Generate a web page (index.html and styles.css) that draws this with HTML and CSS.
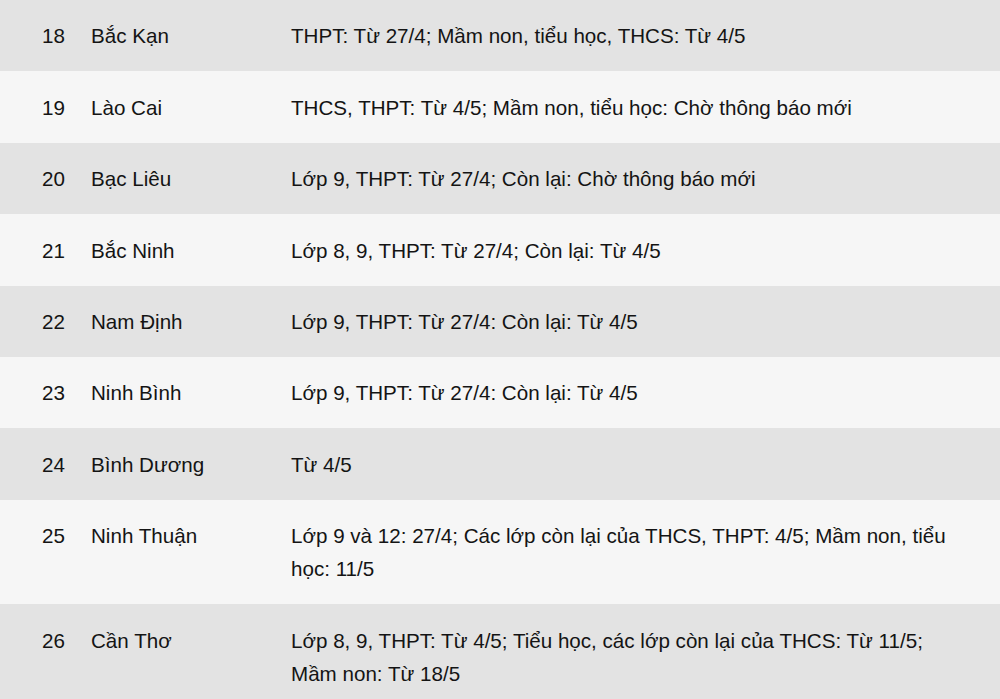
FILE: index.html
```html
<!DOCTYPE html>
<html lang="vi">
<head>
<meta charset="utf-8">
<link rel="stylesheet" href="styles.css">
</head>
<body>
<div class="table">
  <div class="row odd"><div class="num">18</div><div class="name">Bắc Kạn</div><div class="info">THPT: Từ 27/4; Mầm non, tiểu học, THCS: Từ 4/5</div></div>
  <div class="row even"><div class="num">19</div><div class="name">Lào Cai</div><div class="info">THCS, THPT: Từ 4/5; Mầm non, tiểu học: Chờ thông báo mới</div></div>
  <div class="row odd"><div class="num">20</div><div class="name">Bạc Liêu</div><div class="info">Lớp 9, THPT: Từ 27/4; Còn lại: Chờ thông báo mới</div></div>
  <div class="row even"><div class="num">21</div><div class="name">Bắc Ninh</div><div class="info">Lớp 8, 9, THPT: Từ 27/4; Còn lại: Từ 4/5</div></div>
  <div class="row odd"><div class="num">22</div><div class="name">Nam Định</div><div class="info">Lớp 9, THPT: Từ 27/4: Còn lại: Từ 4/5</div></div>
  <div class="row even"><div class="num">23</div><div class="name">Ninh Bình</div><div class="info">Lớp 9, THPT: Từ 27/4: Còn lại: Từ 4/5</div></div>
  <div class="row odd"><div class="num">24</div><div class="name">Bình Dương</div><div class="info">Từ 4/5</div></div>
  <div class="row even"><div class="num">25</div><div class="name">Ninh Thuận</div><div class="info">Lớp 9 và 12: 27/4; Các lớp còn lại của THCS, THPT: 4/5; Mầm non, tiểu học: 11/5</div></div>
  <div class="row odd"><div class="num">26</div><div class="name">Cần Thơ</div><div class="info">Lớp 8, 9, THPT: Từ 4/5; Tiểu học, các lớp còn lại của THCS: Từ 11/5; Mầm non: Từ 18/5</div></div>
</div>
</body>
</html>
```

FILE: styles.css
```css
html, body {
  margin: 0;
  padding: 0;
  background: #dde8ea;
}
body {
  font-family: "Liberation Sans", Arial, sans-serif;
  font-size: 20.6px;
  color: #141414;
}
.table {
  display: flex;
  flex-direction: column;
  width: 1000px;
}
.row {
  display: grid;
  grid-template-columns: 91px 200px 1fr;
  padding: 19.4px 0 19px;
  line-height: 33px;
}
.odd { background: #e3e3e3; }
.even { background: #f6f6f6; }
.num {
  padding-left: 42px;
}
.info {
  padding-right: 40px;
}
```
